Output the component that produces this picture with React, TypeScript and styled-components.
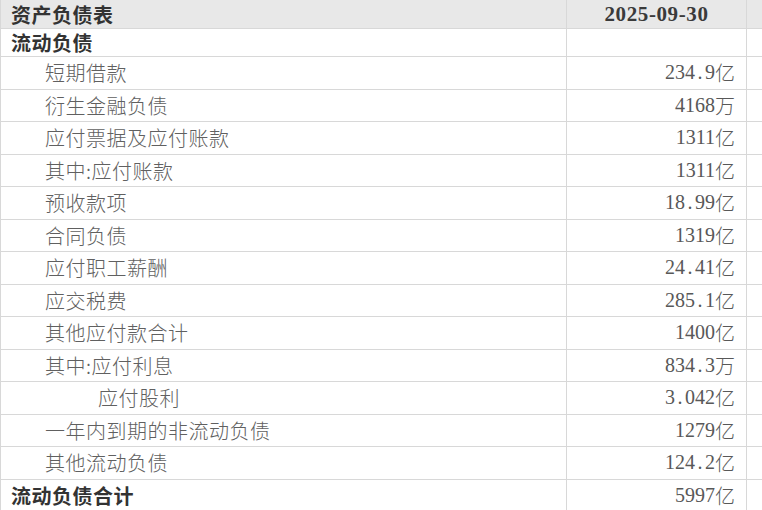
import styled, { createGlobalStyle } from "styled-components";

const GlobalStyle = createGlobalStyle`
  html, body {
    margin: 0;
    padding: 0;
    background: #ffffff;
  }
`;

const StyledSheet = styled.div`
  width: 762px;
  height: 510px;
  overflow: hidden;
  border-left: 1px solid #d8d8d8;
  box-sizing: border-box;
  font-family: "Noto Sans CJK SC", sans-serif;
`;

const StyledRow = styled.div<{ $height: number; $head?: boolean }>`
  display: grid;
  grid-template-columns: 566px 180px 1fr;
  height: ${(p) => p.$height}px;
  background: ${(p) => (p.$head ? "#e8e8e8" : "#ffffff")};
`;

const StyledCell = styled.div`
  border-right: 1px solid #d8d8d8;
  border-bottom: 1px solid #d8d8d8;
  display: flex;
  align-items: center;
  overflow: hidden;
  white-space: nowrap;
`;

const StyledNameCell = styled(StyledCell)<{ $level: number; $strong?: boolean }>`
  padding-left: ${(p) => [10, 44, 97][p.$level]}px;
  font-size: 20px;
  letter-spacing: 0.5px;
  font-weight: ${(p) => (p.$strong ? 700 : 300)};
  color: ${(p) => (p.$strong ? "#333333" : "#606060")};
`;

const StyledValueCell = styled(StyledCell)`
  justify-content: flex-end;
  padding-right: 11px;
  font-family: "Liberation Serif", "Noto Sans CJK SC", serif;
  font-size: 20px;
  color: #585858;
`;

const StyledUnit = styled.span`
  font-family: "Noto Sans CJK SC", sans-serif;
  font-weight: 300;
`;

const StyledDot = styled.span`
  display: inline-block;
  width: 10px;
  text-align: center;
`;

const StyledDateCell = styled(StyledCell)`
  justify-content: center;
  font-family: "Liberation Serif", serif;
  font-size: 21px;
  font-weight: 700;
  color: #3a3a3a;
  letter-spacing: 0.6px;
`;

const StyledFillCell = styled(StyledCell)`
  border-right: none;
`;

const rows: { name: string; value: string; level: number; strong?: boolean }[] = [
  { name: "流动负债", value: "", level: 0, strong: true },
  { name: "短期借款", value: "234.9亿", level: 1 },
  { name: "衍生金融负债", value: "4168万", level: 1 },
  { name: "应付票据及应付账款", value: "1311亿", level: 1 },
  { name: "其中:应付账款", value: "1311亿", level: 1 },
  { name: "预收款项", value: "18.99亿", level: 1 },
  { name: "合同负债", value: "1319亿", level: 1 },
  { name: "应付职工薪酬", value: "24.41亿", level: 1 },
  { name: "应交税费", value: "285.1亿", level: 1 },
  { name: "其他应付款合计", value: "1400亿", level: 1 },
  { name: "其中:应付利息", value: "834.3万", level: 1 },
  { name: "应付股利", value: "3.042亿", level: 2 },
  { name: "一年内到期的非流动负债", value: "1279亿", level: 1 },
  { name: "其他流动负债", value: "124.2亿", level: 1 },
  { name: "流动负债合计", value: "5997亿", level: 0, strong: true },
];

const Amount = ({ value }: { value: string }) => {
  if (!value) return null;
  const unit = value.slice(-1);
  const [whole, frac] = value.slice(0, -1).split(".");
  return (
    <>
      {whole}
      {frac !== undefined && (
        <>
          <StyledDot>.</StyledDot>
          {frac}
        </>
      )}
      <StyledUnit>{unit}</StyledUnit>
    </>
  );
};

export default function App() {
  return (
    <>
      <GlobalStyle />
      <StyledSheet>
        <StyledRow $height={29} $head>
          <StyledNameCell $level={0} $strong>
            资产负债表
          </StyledNameCell>
          <StyledDateCell>2025-09-30</StyledDateCell>
          <StyledFillCell />
        </StyledRow>
        {rows.map((r, i) => (
          <StyledRow key={i} $height={i === 0 ? 28 : 32.5}>
            <StyledNameCell $level={r.level} $strong={r.strong}>
              {r.name}
            </StyledNameCell>
            <StyledValueCell>
              <Amount value={r.value} />
            </StyledValueCell>
            <StyledFillCell />
          </StyledRow>
        ))}
      </StyledSheet>
    </>
  );
}
